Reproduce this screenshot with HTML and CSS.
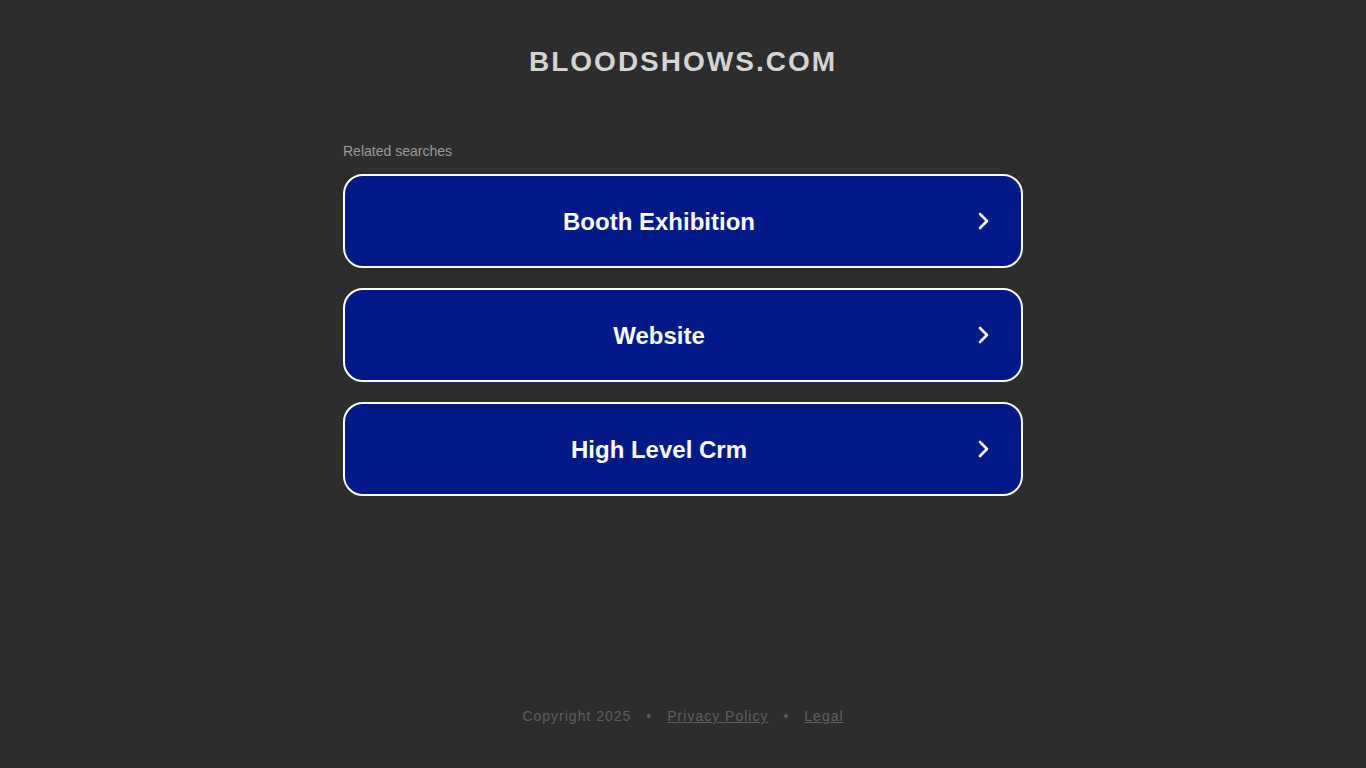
FILE: index.html
```html
<!DOCTYPE html>
<html lang="en">
<head>
  <meta charset="UTF-8" />
  <meta name="viewport" content="width=device-width, initial-scale=1.0"/>
  <title>bloodshows.com</title>
  <link rel="stylesheet" href="styles.css">
</head>
<body>
  <div class="page">
    <h1 class="domain">BLOODSHOWS.COM</h1>

    <div class="searches">
      <p class="searches-title">Related searches</p>
      <a class="search-link" href="#">
        <span class="search-text">Booth Exhibition</span>
        <svg class="chevron" viewBox="0 0 24 24" width="24" height="24"><path d="M9 5l7 7-7 7" /></svg>
      </a>
      <a class="search-link" href="#">
        <span class="search-text">Website</span>
        <svg class="chevron" viewBox="0 0 24 24" width="24" height="24"><path d="M9 5l7 7-7 7" /></svg>
      </a>
      <a class="search-link" href="#">
        <span class="search-text">High Level Crm</span>
        <svg class="chevron" viewBox="0 0 24 24" width="24" height="24"><path d="M9 5l7 7-7 7" /></svg>
      </a>
    </div>
  </div>

  <footer class="footer">
    <span>Copyright 2025</span>
    <span class="dot">•</span>
    <a href="#">Privacy Policy</a>
    <span class="dot">•</span>
    <a href="#">Legal</a>
  </footer>
</body>
</html>
```

FILE: styles.css
```css
body {
  margin: 0;
  background: #2d2d2d;
  font-family: "Liberation Sans", Arial, sans-serif;
  min-height: 100vh;
  display: flex;
  flex-direction: column;
}

.page {
  flex: 1;
  display: flex;
  flex-direction: column;
  align-items: center;
}

.domain {
  margin: 45px 0 0;
  font-size: 28px;
  line-height: 34px;
  letter-spacing: 2px;
  color: #d4d4d4;
  font-weight: bold;
}

.searches {
  width: 680px;
  margin-top: 63px;
}

.searches-title {
  margin: 0 0 14px;
  font-size: 14px;
  line-height: 18px;
  color: #9a9a9a;
}

.search-link {
  display: flex;
  align-items: center;
  height: 94px;
  box-sizing: border-box;
  margin-bottom: 20px;
  background: #011a88;
  border: 2px solid #fff;
  border-radius: 20px;
  color: #fff;
  text-decoration: none;
}

.search-text {
  flex: 1;
  text-align: center;
  padding-top: 1px;
  font-size: 24px;
  font-weight: bold;
}

.chevron {
  width: 24px;
  height: 24px;
  margin: 0 26px 0 -2px;
  fill: none;
  stroke: #fff;
  stroke-width: 2.6;
  stroke-linecap: round;
  stroke-linejoin: round;
}

.footer {
  display: flex;
  justify-content: center;
  gap: 15px;
  padding-bottom: 43px;
  font-size: 14px;
  line-height: 18px;
  letter-spacing: 1px;
  color: #5f5f5f;
}

.footer a {
  color: #5f5f5f;
}
```
